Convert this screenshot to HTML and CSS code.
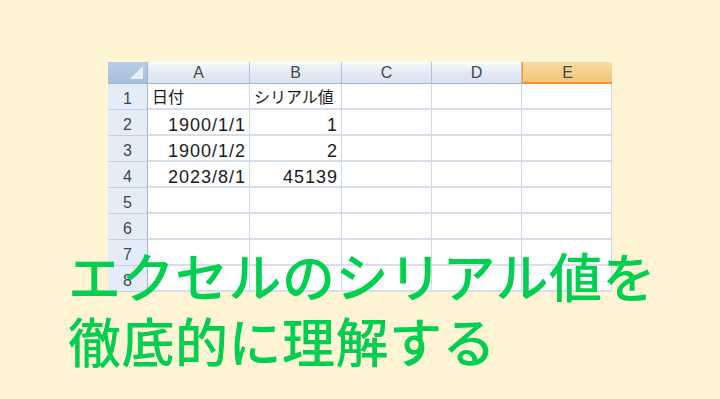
FILE: index.html
```html
<!DOCTYPE html>
<html lang="ja">
<head>
    <meta charset="UTF-8">
    <meta name="viewport" content="width=device-width, initial-scale=1.0">
    <title>エクセルのシリアル値を徹底的に理解する</title>
    <link rel="stylesheet" href="styles.css">
</head>
<body>

    <div class="stage">
        <div class="sheet">
            <div class="corner"></div>
            <div class="col-head">A</div>
            <div class="col-head">B</div>
            <div class="col-head">C</div>
            <div class="col-head">D</div>
            <div class="col-head selected">E</div>

            <div class="row-head">1</div>
            <div class="cell jp">日付</div>
            <div class="cell jp">シリアル値</div>
            <div class="cell"></div>
            <div class="cell"></div>
            <div class="cell"></div>

            <div class="row-head">2</div>
            <div class="cell num">1900/1/1</div>
            <div class="cell num">1</div>
            <div class="cell"></div>
            <div class="cell"></div>
            <div class="cell"></div>

            <div class="row-head">3</div>
            <div class="cell num">1900/1/2</div>
            <div class="cell num">2</div>
            <div class="cell"></div>
            <div class="cell"></div>
            <div class="cell"></div>

            <div class="row-head">4</div>
            <div class="cell num">2023/8/1</div>
            <div class="cell num">45139</div>
            <div class="cell"></div>
            <div class="cell"></div>
            <div class="cell"></div>

            <div class="row-head">5</div>
            <div class="cell"></div>
            <div class="cell"></div>
            <div class="cell"></div>
            <div class="cell"></div>
            <div class="cell"></div>

            <div class="row-head">6</div>
            <div class="cell"></div>
            <div class="cell"></div>
            <div class="cell"></div>
            <div class="cell"></div>
            <div class="cell"></div>

            <div class="row-head">7</div>
            <div class="cell"></div>
            <div class="cell"></div>
            <div class="cell"></div>
            <div class="cell"></div>
            <div class="cell"></div>

            <div class="row-head">8</div>
            <div class="cell"></div>
            <div class="cell"></div>
            <div class="cell"></div>
            <div class="cell"></div>
            <div class="cell"></div>
        </div>

        <!-- title sits on top of the sheet -->
        <h1 class="title">エクセルのシリアル値を<br>徹底的に理解する</h1>
    </div>

</body>
</html>
```

FILE: styles.css
```css
body {
    margin: 0;
    background-color: #fff5d5;
    font-family: "Liberation Sans", "Noto Sans CJK JP", sans-serif;
    overflow: hidden;
}

.stage {
    position: relative;
    width: 720px;
    height: 399px;
    padding: 62px 0 0 108px;
    box-sizing: border-box;
}

/* Spreadsheet */
.sheet {
    display: grid;
    grid-template-columns: 40px 102px 92px 90px 90px 90px;
    grid-template-rows: 22px repeat(8, 26px);
    width: 504px;
    background-color: #ffffff;
}

.corner {
    position: relative;
    background: linear-gradient(to bottom, #b9cde5, #a7bfdd);
    border-right: 1px solid #9eb6ce;
    border-bottom: 1px solid #9eb6ce;
}

.corner::after {
    content: "";
    position: absolute;
    right: 4px;
    bottom: 4px;
    border-left: 13px solid transparent;
    border-bottom: 13px solid #e9eff7;
}

.col-head {
    display: flex;
    align-items: center;
    justify-content: center;
    background: linear-gradient(to bottom, #f8fafd, #e3e9f2 55%, #d9e2ee);
    border-right: 1px solid #b1c5da;
    border-bottom: 1px solid #9eb6ce;
    font-size: 16px;
    color: #3b4a4a;
    padding-top: 1px;
}

.col-head.selected {
    background: linear-gradient(to bottom, #f9dca6, #f4c677);
    border-left: 1px solid #f29536;
    border-right: none;
    border-bottom: 2px solid #f29536;
}

.row-head {
    display: flex;
    align-items: flex-end;
    justify-content: center;
    padding-bottom: 1px;
    background-color: #e4ecf7;
    border-right: 1px solid #9eb6ce;
    border-bottom: 1px solid #c5d1e0;
    font-size: 16px;
    color: #3b4a4a;
}

.cell {
    display: flex;
    align-items: flex-end;
    padding: 0 3px 0 4px;
    border-right: 1px solid #d0d7e5;
    border-bottom: 2px solid #d8dfea;
    font-size: 18px;
    line-height: 18px;
    letter-spacing: 1px;
    color: #1a1a1a;
    white-space: nowrap;
}

.cell.jp {
    font-size: 16px;
    letter-spacing: 0;
    padding-bottom: 1px;
}

.cell.num {
    justify-content: flex-end;
}

/* Title */
.title {
    position: absolute;
    left: 68px;
    top: 243px;
    margin: 0;
    font-family: "Noto Sans CJK JP", sans-serif;
    font-size: 53px;
    font-weight: 500;
    line-height: 65px;
    letter-spacing: 0.5px;
    color: #00cf4f;
}
```
